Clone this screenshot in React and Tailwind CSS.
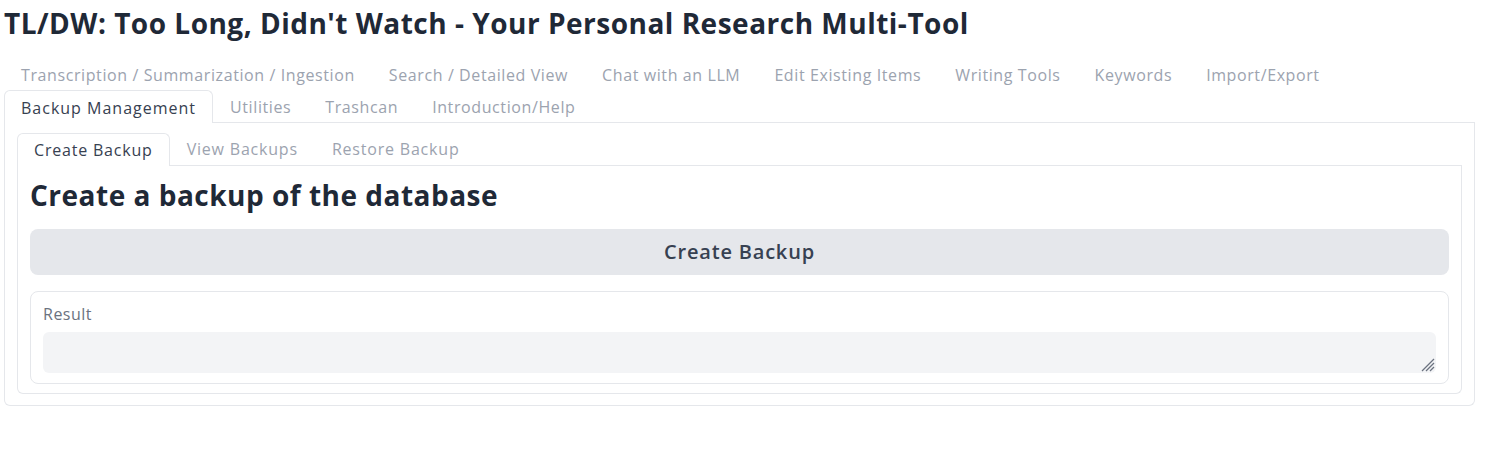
import React from 'react';

const topTabs = [
  'Transcription / Summarization / Ingestion',
  'Search / Detailed View',
  'Chat with an LLM',
  'Edit Existing Items',
  'Writing Tools',
  'Keywords',
  'Import/Export',
];

const moreTabs = ['Utilities', 'Trashcan', 'Introduction/Help'];

const innerTabs = ['View Backups', 'Restore Backup'];

function Resizer() {
  return (
    <svg className="absolute right-[1px] bottom-[1px] pointer-events-none" width="15" height="15" viewBox="0 0 15 15">
      <g stroke="#6b7280" strokeWidth="1.2">
        <line x1="14" y1="2" x2="2" y2="14" />
        <line x1="14" y1="6" x2="6" y2="14" />
        <line x1="14" y1="10" x2="10" y2="14" />
      </g>
    </svg>
  );
}

function App() {
  return (
    <div className="w-[1508px] h-[475px] bg-white font-['Open_Sans',sans-serif] text-[#1f2937]">
      <div className="w-[1471px] ml-1">
        {/* Title */}
        <h1 className="h-[49px] pt-[4px] text-[28px] leading-[38px] font-bold tracking-[0.5px] text-[#1f2937]">
          TL/DW: Too Long, Didn't Watch - Your Personal Research Multi-Tool
        </h1>

        {/* Main tab nav */}
        <div className="mt-[9px] flex flex-wrap border-b border-[#e5e7eb]">
          {topTabs.map((t) => (
            <button key={t} className="h-8 pt-[2px] px-[17px] text-[16px] tracking-[0.6px] text-[#9ca3af] whitespace-nowrap">
              {t}
            </button>
          ))}
          <div className="basis-full h-0" />
          <button className="relative -mb-px h-[33px] pt-[2px] px-4 text-[16px] tracking-[1px] text-[#374151] bg-white border border-b-0 border-[#e5e7eb] rounded-t-md whitespace-nowrap">
            Backup Management
          </button>
          {moreTabs.map((t) => (
            <button key={t} className="h-8 pt-[2px] px-[17px] text-[16px] tracking-[0.6px] text-[#9ca3af] whitespace-nowrap">
              {t}
            </button>
          ))}
        </div>

        {/* Main panel */}
        <div className="border border-t-0 border-[#e5e7eb] rounded-b-md px-3 pt-[10px] pb-[11px]">
          <div className="flex border-b border-[#e5e7eb]">
            <button className="relative -mb-px h-[33px] px-4 text-[16px] tracking-[0.8px] text-[#374151] bg-white border border-b-0 border-[#e5e7eb] rounded-t-md whitespace-nowrap">
              Create Backup
            </button>
            {innerTabs.map((t) => (
              <button key={t} className="h-8 px-[17px] text-[16px] tracking-[0.8px] text-[#9ca3af] whitespace-nowrap">
                {t}
              </button>
            ))}
          </div>

          <div className="border border-t-0 border-[#e5e7eb] rounded-b-md px-3 pt-3 pb-[9px] flex flex-col gap-4">
            <h2 className="h-[35px] text-[28px] leading-[35px] font-bold tracking-[0.5px] text-[#1f2937]">
              Create a backup of the database
            </h2>

            <button className="h-[46px] w-full rounded-lg bg-[#e5e7eb] text-[20px] font-semibold tracking-[0.8px] text-[#374151]">
              Create Backup
            </button>

            <div className="border border-[#e5e7eb] rounded-lg px-3 pt-3 pb-[10px] flex flex-col gap-2">
              <label className="text-[16px] leading-[20px] tracking-[0.5px] text-[#6b7280]">Result</label>
              <div className="relative">
                <textarea
                  rows={1}
                  readOnly
                  className="block h-[41px] w-full rounded-md bg-[#f3f4f6] resize-none outline-none px-3 py-2 text-[15px]"
                />
                <Resizer />
              </div>
            </div>
          </div>
        </div>
      </div>
    </div>
  );
}

export default App;
